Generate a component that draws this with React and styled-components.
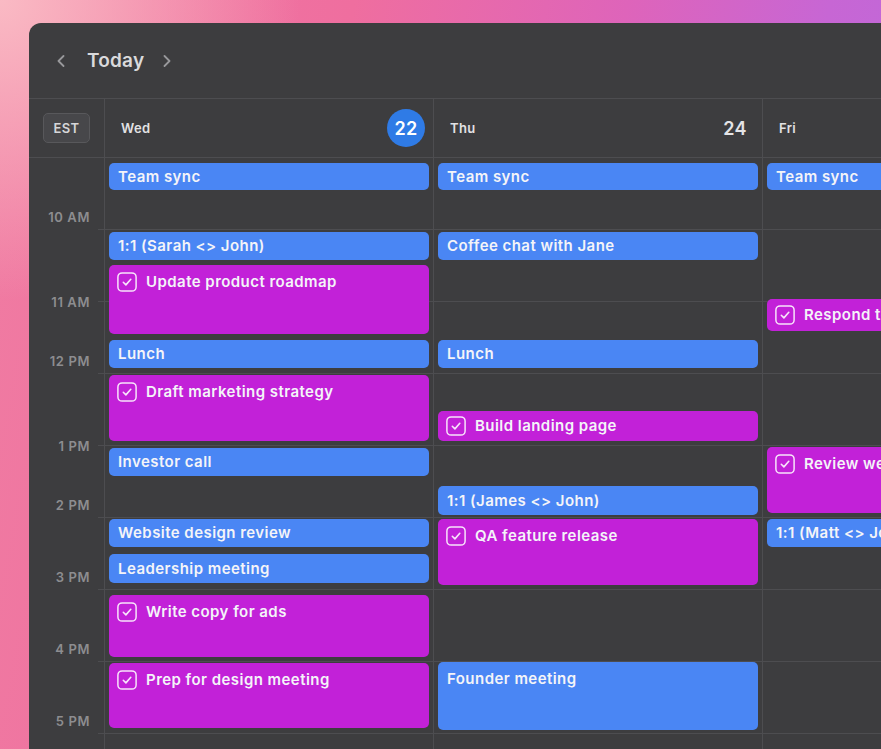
import React from 'react';
import styled, { createGlobalStyle } from 'styled-components';

const GlobalStyle = createGlobalStyle`
  html, body {
    margin: 0;
    padding: 0;
    overflow: hidden;
  }
  body {
    font-family: Inter, "Noto Sans", "Liberation Sans", sans-serif;
    background:
      radial-gradient(circle at 0 0, rgba(250, 186, 196, 1) 0, rgba(250, 186, 196, 0) 300px),
      linear-gradient(100deg, #f07ca2 0%, #ef6e9f 35%, #de64ba 62%, #c766d4 82%, #bb69dc 100%);
    background-color: #ef6e9f;
  }
`;

const Page = styled.div`
  width: 881px;
  height: 749px;
  overflow: hidden;
  padding: 23px 0 0 29px;
  box-sizing: border-box;
`;

const Window = styled.div`
  width: 1100px;
  height: 800px;
  background: #3d3d3f;
  border-top-left-radius: 12px;
  overflow: hidden;
  color: #e6e6e8;
`;

const Toolbar = styled.div`
  height: 75px;
  display: flex;
  align-items: center;
  padding-left: 28px;
  border-bottom: 1px solid #4d4d50;
`;

const NavButton = styled.span`
  display: flex;
  align-items: center;
  color: #98989b;
`;

const Title = styled.div`
  font-size: 19px;
  font-weight: 600;
  color: #dadadc;
  margin: 0 19px 0 22px;
  letter-spacing: 0.2px;
`;

const HeaderRow = styled.div`
  display: flex;
  height: 58px;
  border-bottom: 1px solid #4d4d50;
`;

const Corner = styled.div`
  width: 75px;
  flex: none;
  display: flex;
  align-items: center;
  justify-content: center;
`;

const ZoneBadge = styled.div`
  width: 47px;
  height: 30px;
  box-sizing: border-box;
  border: 1px solid #58585b;
  border-radius: 5px;
  background: #47474a;
  display: flex;
  align-items: center;
  justify-content: center;
  font-size: 13px;
  font-weight: 600;
  letter-spacing: 0.4px;
  color: #d6d6d8;
`;

const DayHead = styled.div`
  width: 329px;
  flex: none;
  box-sizing: border-box;
  border-left: 1px solid #4d4d50;
  display: flex;
  align-items: center;
  justify-content: space-between;
  padding: 0 8px 0 16px;
`;

const DayName = styled.span`
  font-size: 13px;
  font-weight: 600;
  letter-spacing: 0.3px;
  color: #e2e2e4;
`;

const DateNum = styled.span`
  width: 38px;
  height: 38px;
  border-radius: 50%;
  display: flex;
  align-items: center;
  justify-content: center;
  font-size: 18px;
  font-weight: 600;
  letter-spacing: 0.3px;
  color: ${(p) => (p.$today ? '#ffffff' : '#e4e4e6')};
  background: ${(p) => (p.$today ? '#2f7be6' : 'transparent')};
`;

const Body = styled.div`
  display: flex;
`;

const TimeCol = styled.div`
  width: 75px;
  flex: none;
  display: flex;
  flex-direction: column;
`;

const TimeCell = styled.div`
  height: 72px;
  display: flex;
  align-items: flex-end;
  justify-content: flex-end;
  padding-right: 14px;
  box-sizing: border-box;
  background: linear-gradient(#4d4d50, #4d4d50) no-repeat right bottom / 6px 1px;
`;

const TimeLabel = styled.span`
  font-size: 13px;
  font-weight: 600;
  line-height: 16px;
  letter-spacing: 0.6px;
  color: #8d8d90;
  margin-bottom: ${(p) => (p.$onLine ? '-8px' : '5px')};
`;

const DayCol = styled.div`
  position: relative;
  width: 329px;
  height: 720px;
  flex: none;
  box-sizing: border-box;
  border-left: 1px solid #4d4d50;
  background: repeating-linear-gradient(
    to bottom,
    transparent 0,
    transparent 71px,
    #4d4d50 71px,
    #4d4d50 72px
  );
`;

const Event = styled.div`
  position: absolute;
  left: 4px;
  right: 4px;
  box-sizing: border-box;
  border-radius: 5px;
  background: ${(p) => (p.$task ? '#c221d8' : '#4a86f4')};
  display: flex;
  align-items: ${(p) => (p.$tall ? 'flex-start' : 'center')};
  padding: ${(p) => (p.$tall ? '7px 9px 0 8px' : '0 9px 0 8px')};
  gap: 9px;
  overflow: hidden;
`;

const EventTitle = styled.span`
  font-size: 15px;
  font-weight: 600;
  line-height: 20px;
  letter-spacing: 0.45px;
  color: #f4f4f8;
  white-space: nowrap;
  padding-left: ${(p) => (p.$task ? '0' : '1px')};
`;

const CheckBox = () => (
  <svg width="20" height="20" viewBox="0 0 20 20" fill="none" style={{ flex: 'none' }}>
    <rect x="0.9" y="0.9" width="18.2" height="18.2" rx="4.2" stroke="rgba(255,255,255,0.88)" strokeWidth="1.5" />
    <path d="M6.3 10.3l2.6 2.6 4.9-5.6" stroke="rgba(255,255,255,0.88)" strokeWidth="1.6" strokeLinecap="round" strokeLinejoin="round" />
  </svg>
);

const Chevron = ({ dir }) => (
  <svg width="8" height="12" viewBox="0 0 8 12" fill="none">
    <path
      d={dir === 'left' ? 'M6.5 1L1.5 6l5 5' : 'M1.5 1l5 5-5 5'}
      stroke="currentColor"
      strokeWidth="1.8"
      strokeLinecap="round"
      strokeLinejoin="round"
    />
  </svg>
);

const hours = [
  { label: '10 AM' },
  { label: '11 AM', onLine: true },
  { label: '12 PM' },
  { label: '1 PM', onLine: true },
  { label: '2 PM' },
  { label: '3 PM' },
  { label: '4 PM' },
  { label: '5 PM' },
  { label: '' },
];

const days = [
  {
    name: 'Wed',
    date: 22,
    today: true,
    events: [
      { title: 'Team sync', top: 5, h: 27 },
      { title: '1:1 (Sarah <> John)', top: 74, h: 28 },
      { title: 'Update product roadmap', top: 107, h: 69, task: true },
      { title: 'Lunch', top: 182, h: 28 },
      { title: 'Draft marketing strategy', top: 217, h: 66, task: true },
      { title: 'Investor call', top: 290, h: 28 },
      { title: 'Website design review', top: 361, h: 28 },
      { title: 'Leadership meeting', top: 396, h: 29 },
      { title: 'Write copy for ads', top: 437, h: 62, task: true },
      { title: 'Prep for design meeting', top: 505, h: 65, task: true },
    ],
  },
  {
    name: 'Thu',
    date: 24,
    events: [
      { title: 'Team sync', top: 5, h: 27 },
      { title: 'Coffee chat with Jane', top: 74, h: 28 },
      { title: 'Lunch', top: 182, h: 28 },
      { title: 'Build landing page', top: 253, h: 30, task: true },
      { title: '1:1 (James <> John)', top: 328, h: 29 },
      { title: 'QA feature release', top: 361, h: 66, task: true },
      { title: 'Founder meeting', top: 504, h: 68 },
    ],
  },
  {
    name: 'Fri',
    events: [
      { title: 'Team sync', top: 5, h: 27 },
      { title: 'Respond to customer emails', top: 141, h: 32, task: true },
      { title: 'Review weekly metrics', top: 289, h: 66, task: true },
      { title: '1:1 (Matt <> John)', top: 361, h: 28 },
    ],
  },
];

export default function App() {
  return (
    <>
      <GlobalStyle />
      <Page>
        <Window>
          <Toolbar>
            <NavButton>
              <Chevron dir="left" />
            </NavButton>
            <Title>Today</Title>
            <NavButton>
              <Chevron dir="right" />
            </NavButton>
          </Toolbar>

          <HeaderRow>
            <Corner>
              <ZoneBadge>EST</ZoneBadge>
            </Corner>
            {days.map((d) => (
              <DayHead key={d.name}>
                <DayName>{d.name}</DayName>
                {d.date && <DateNum $today={d.today}>{d.date}</DateNum>}
              </DayHead>
            ))}
          </HeaderRow>

          <Body>
            <TimeCol>
              {hours.map((h, i) => (
                <TimeCell key={i}>
                  {h.label && <TimeLabel $onLine={h.onLine}>{h.label}</TimeLabel>}
                </TimeCell>
              ))}
            </TimeCol>
            {days.map((d) => (
              <DayCol key={d.name}>
                {d.events.map((e) => (
                  <Event
                    key={e.title}
                    $task={e.task}
                    $tall={e.h > 34}
                    style={{ top: e.top, height: e.h }}
                  >
                    {e.task && <CheckBox />}
                    <EventTitle $task={e.task}>{e.title}</EventTitle>
                  </Event>
                ))}
              </DayCol>
            ))}
          </Body>
        </Window>
      </Page>
    </>
  );
}
